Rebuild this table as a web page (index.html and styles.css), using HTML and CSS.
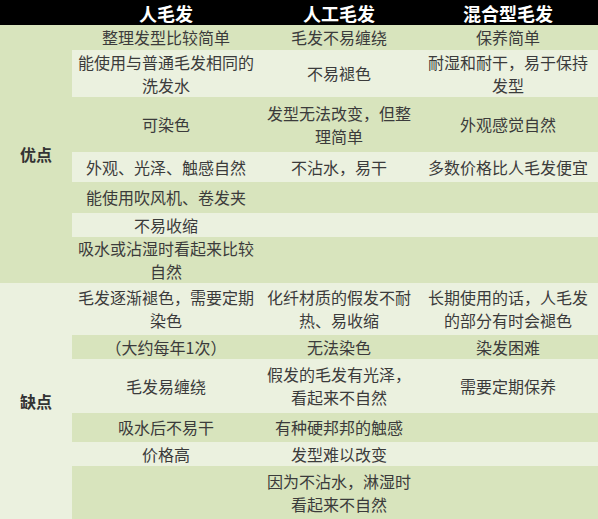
FILE: index.html
```html
<!DOCTYPE html>
<html lang="zh-CN">
<head>
<meta charset="utf-8">
<title>人毛发 / 人工毛发 / 混合型毛发</title>
<link rel="stylesheet" href="styles.css">
</head>
<body>
<div class="table">
  <div class="hd"></div>
  <div class="hd">人毛发</div>
  <div class="hd">人工毛发</div>
  <div class="hd">混合型毛发</div>

  <div class="label g pros">优点</div>
  <div class="c g">整理发型比较简单</div>
  <div class="c g">毛发不易缠绕</div>
  <div class="c g">保养简单</div>

  <div class="c l">能使用与普通毛发相同的洗发水</div>
  <div class="c l">不易褪色</div>
  <div class="c l">耐湿和耐干，易于保持发型</div>

  <div class="c g">可染色</div>
  <div class="c g">发型无法改变，但整理简单</div>
  <div class="c g">外观感觉自然</div>

  <div class="c l">外观、光泽、触感自然</div>
  <div class="c l">不沾水，易干</div>
  <div class="c l">多数价格比人毛发便宜</div>

  <div class="c g">能使用吹风机、卷发夹</div>
  <div class="c g"></div>
  <div class="c g"></div>

  <div class="c l">不易收缩</div>
  <div class="c l"></div>
  <div class="c l"></div>

  <div class="c g">吸水或沾湿时看起来比较自然</div>
  <div class="c g"></div>
  <div class="c g"></div>

  <div class="label l cons">缺点</div>
  <div class="c l">毛发逐渐褪色，需要定期染色</div>
  <div class="c l">化纤材质的假发不耐热、易收缩</div>
  <div class="c l">长期使用的话，人毛发的部分有时会褪色</div>

  <div class="c g">（大约每年1次）</div>
  <div class="c g">无法染色</div>
  <div class="c g">染发困难</div>

  <div class="c l">毛发易缠绕</div>
  <div class="c l">假发的毛发有光泽，看起来不自然</div>
  <div class="c l">需要定期保养</div>

  <div class="c g">吸水后不易干</div>
  <div class="c g">有种硬邦邦的触感</div>
  <div class="c g"></div>

  <div class="c l">价格高</div>
  <div class="c l">发型难以改变</div>
  <div class="c l"></div>

  <div class="c g"></div>
  <div class="c g">因为不沾水，淋湿时看起来不自然</div>
  <div class="c g"></div>
</div>
</body>
</html>
```

FILE: styles.css
```css
html, body {
  margin: 0;
  padding: 0;
  background: #ffffff;
}

.table {
  width: 598px;
  height: 519px;
  display: grid;
  grid-template-columns: 72px 188px 158px 180px;
  grid-template-rows: 25px 25px 47px 55px 30px 31px 24px 46px 52px 24px 54px 29px 24px 53px;
  font-family: "Microsoft YaHei", "Noto Sans CJK SC", "Noto Sans", sans-serif;
  font-size: 16px;
  line-height: 23px;
  color: #3b3b3b;
}

.hd {
  background: #000000;
  color: #ffffff;
  font-weight: bold;
  font-size: 18px;
  display: flex;
  align-items: center;
  justify-content: center;
  padding-top: 1px;
}

.label {
  grid-column: 1;
  display: flex;
  align-items: center;
  justify-content: center;
  font-weight: bold;
  color: #333333;
  font-size: 16px;
}

.pros {
  grid-row: 2 / span 7;
}

.cons {
  grid-row: 9 / span 6;
}

.c {
  display: flex;
  align-items: center;
  justify-content: center;
  text-align: center;
  padding: 0 6px;
}

.g {
  background: #d8e4bd;
}

.l {
  background: #ebf1df;
}
```
